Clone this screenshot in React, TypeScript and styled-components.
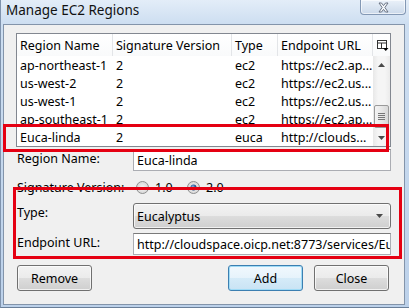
import React from "react";
import styled, { createGlobalStyle } from "styled-components";

const GlobalStyle = createGlobalStyle`
	html, body {
		margin: 0;
		padding: 0;
	}
	body {
		width: 409px;
		height: 308px;
		overflow: hidden;
		font-family: "Noto Sans", "Liberation Sans", sans-serif;
		font-size: 12.5px;
		color: #000;
	}
`;

const Window = styled.div`
	position: relative;
	width: 409px;
	height: 308px;
	box-sizing: border-box;
	display: flex;
	flex-direction: column;
	background: linear-gradient(to bottom, #e3edf8 0px, #cddef1 24px, #bcd1ea 100%);
	border-left: 1px solid #7f93ad;
	border-bottom: 1px solid #6a7f99;
`;

const TitleBar = styled.div`
	height: 24px;
	display: flex;
	align-items: flex-start;
`;

const Title = styled.div`
	padding: 2px 0 0 5px;
	line-height: 17px;
	font-size: 13.5px;
	color: #111;
`;

const CloseButton = styled.div`
	margin-left: auto;
	margin-right: 3px;
	width: 46px;
	height: 15px;
	box-sizing: border-box;
	border: 1px solid #8398b4;
	border-top: none;
	border-radius: 0 0 4px 4px;
	background: linear-gradient(to bottom, #eaf1f9, #cbd9ea);
	box-shadow: inset 0 0 0 1px rgba(255, 255, 255, 0.6);
	display: flex;
	align-items: center;
	justify-content: center;
`;

const Client = styled.div`
	margin: 0 4px 0 2px;
	height: 281px;
	box-sizing: border-box;
	border: 1px solid #8394aa;
	background: #f0f0f0;
	padding: 8px 12px 0 12px;
	display: flex;
	flex-direction: column;
`;

const Table = styled.div`
	width: 375px;
	box-sizing: border-box;
	border: 1px solid #828790;
	background: #fff;
`;

const cols = "96px 119px 46px 95px 17px";

const HeaderRow = styled.div`
	display: grid;
	grid-template-columns: ${cols};
	height: 22px;
`;

const HeaderCell = styled.div<{ $last?: boolean }>`
	display: flex;
	align-items: center;
	padding-left: ${({ $last }) => ($last ? "4px" : "3px")};
	border-right: ${({ $last }) => ($last ? "none" : "1px solid #e3e5e8")};
	white-space: nowrap;
	overflow: hidden;
	background: linear-gradient(to bottom, #ffffff, #f9fafb);
`;

const Body = styled.div`
	display: flex;
	height: 90px;
`;

const Rows = styled.div`
	width: 356px;
	display: flex;
	flex-direction: column;
`;

const Row = styled.div`
	display: grid;
	grid-template-columns: 96px 119px 46px 95px;
	height: 18px;
	align-items: center;
`;

const Cell = styled.div`
	padding-left: 3px;
	white-space: nowrap;
	overflow: hidden;
`;

const Scrollbar = styled.div`
	width: 17px;
	display: flex;
	flex-direction: column;
	background: linear-gradient(to right, #e8e8e8, #f5f5f5 30%, #f5f5f5 70%, #ebebeb);
`;

const ArrowBox = styled.div`
	height: 17px;
	display: flex;
	align-items: center;
	justify-content: center;
`;

const Track = styled.div`
	flex: 1;
	display: flex;
	flex-direction: column;
	justify-content: flex-end;
	padding-bottom: 1px;
`;

const Thumb = styled.div`
	height: 23px;
	margin: 0 1px;
	box-sizing: border-box;
	border: 1px solid #9a9a9a;
	border-radius: 2px;
	background: linear-gradient(to right, #f3f3f3, #e8e8e8 50%, #d8d8d8);
	display: flex;
	flex-direction: column;
	align-items: center;
	justify-content: center;
	gap: 1px;
`;

const Grip = styled.div`
	width: 7px;
	height: 1px;
	background: #777;
`;

const Form = styled.div`
	margin-top: 2px;
	padding-left: 1px;
	display: grid;
	grid-template-columns: 116px 258px;
	grid-template-rows: 22px 24px 26px 22px;
	row-gap: 4px;
`;

const Label = styled.div<{ $center?: boolean }>`
	align-self: ${({ $center }) => ($center ? "center" : "start")};
	padding-top: ${({ $center }) => ($center ? "0" : "1px")};
	line-height: 17px;
	white-space: nowrap;
`;

const TextInput = styled.div`
	box-sizing: border-box;
	height: 22px;
	border: 1px solid #abadb3;
	border-top-color: #7a7a7a;
	background: #fff;
	padding-left: 3px;
	display: flex;
	align-items: center;
	white-space: nowrap;
	overflow: hidden;
`;

const RadioGroup = styled.div`
	display: flex;
	align-items: center;
	padding-left: 3px;
`;

const RadioOption = styled.div`
	display: flex;
	align-items: center;
	gap: 6px;
	width: 51px;
`;

const Combo = styled.div`
	box-sizing: border-box;
	height: 26px;
	border: 1px solid #707070;
	border-radius: 3px;
	background: linear-gradient(to bottom, #f2f2f2 0%, #ebebeb 50%, #dddddd 50%, #cfcfcf 100%);
	box-shadow: inset 0 0 0 1px rgba(255, 255, 255, 0.7);
	display: flex;
	align-items: center;
	padding: 0 7px 0 3px;
	justify-content: space-between;
`;

const ButtonRow = styled.div`
	margin-top: 10px;
	display: flex;
	padding: 0 3px 0 1px;
	gap: 11px;
`;

const Button = styled.div<{ $primary?: boolean }>`
	width: 75px;
	height: 26px;
	box-sizing: border-box;
	border: 1px solid ${({ $primary }) => ($primary ? "#3c7fb1" : "#707070")};
	border-radius: 3px;
	background: ${({ $primary }) =>
		$primary
			? "linear-gradient(to bottom, #f1f8fd 0%, #e6f3fb 50%, #d5ebf8 50%, #c9e3f4 100%)"
			: "linear-gradient(to bottom, #f2f2f2 0%, #ebebeb 50%, #dddddd 50%, #cfcfcf 100%)"};
	box-shadow: inset 0 0 0 1px ${({ $primary }) => ($primary ? "#9fdbf6" : "rgba(255,255,255,0.7)")};
	display: flex;
	align-items: center;
	justify-content: center;
	&:first-child {
		margin-right: auto;
	}
`;

const Annotation = styled.div`
	position: absolute;
	box-sizing: border-box;
	border: 3px solid #e50012;
	pointer-events: none;
`;

const CloseGlyph = () => (
	<svg width="13" height="11" viewBox="0 0 13 11">
		<path
			d="M2 1 L4.5 1 L6.5 3.6 L8.5 1 L11 1 L7.9 5.5 L11 10 L8.5 10 L6.5 7.4 L4.5 10 L2 10 L5.1 5.5 Z"
			fill="#f4f7fb"
			stroke="#5d6878"
			strokeWidth="0.9"
		/>
	</svg>
);

const ColumnsIcon = () => (
	<svg width="12" height="11" viewBox="0 0 12 11">
		<rect x="0.5" y="0.5" width="9" height="8" fill="#fff" stroke="#333" />
		<line x1="0.5" y1="3" x2="9.5" y2="3" stroke="#333" />
		<line x1="4.5" y1="3" x2="4.5" y2="8.5" stroke="#333" />
		<path d="M6 8 L11.5 8 L8.75 11 Z" fill="#000" />
	</svg>
);

const Triangle = ({ up }: { up?: boolean }) => (
	<svg width="7" height="4" viewBox="0 0 7 4">
		<path d={up ? "M0 4 L3.5 0 L7 4 Z" : "M0 0 L7 0 L3.5 4 Z"} fill="#4a4a4a" />
	</svg>
);

const Radio = ({ checked }: { checked?: boolean }) => (
	<svg width="13" height="13" viewBox="0 0 13 13">
		<defs>
			<radialGradient id="rb" cx="50%" cy="50%" r="50%">
				<stop offset="0%" stopColor="#f6f6f6" />
				<stop offset="100%" stopColor="#d7d7d7" />
			</radialGradient>
			<radialGradient id="rd" cx="40%" cy="35%" r="60%">
				<stop offset="0%" stopColor="#8fb3de" />
				<stop offset="60%" stopColor="#2c5f9e" />
				<stop offset="100%" stopColor="#1a3e73" />
			</radialGradient>
		</defs>
		<circle cx="6.5" cy="6.5" r="6" fill="url(#rb)" stroke="#8e8f8f" />
		{checked && <circle cx="6.5" cy="6.5" r="3" fill="url(#rd)" />}
	</svg>
);

const regions = [
	["ap-northeast-1", "2", "ec2", "https://ec2.ap..."],
	["us-west-2", "2", "ec2", "https://ec2.us..."],
	["us-west-1", "2", "ec2", "https://ec2.us..."],
	["ap-southeast-1", "2", "ec2", "https://ec2.ap..."],
	["Euca-linda", "2", "euca", "http://clouds..."],
];

export default function App() {
	return (
		<Window>
			<GlobalStyle />
			<TitleBar>
				<Title>Manage EC2 Regions</Title>
				<CloseButton>
					<CloseGlyph />
				</CloseButton>
			</TitleBar>
			<Client>
				<Table>
					<HeaderRow>
						<HeaderCell>Region Name</HeaderCell>
						<HeaderCell>Signature Version</HeaderCell>
						<HeaderCell>Type</HeaderCell>
						<HeaderCell>Endpoint URL</HeaderCell>
						<HeaderCell $last>
							<ColumnsIcon />
						</HeaderCell>
					</HeaderRow>
					<Body>
						<Rows>
							{regions.map((r) => (
								<Row key={r[0]}>
									{r.map((c, i) => (
										<Cell key={i}>{c}</Cell>
									))}
								</Row>
							))}
						</Rows>
						<Scrollbar>
							<ArrowBox>
								<Triangle up />
							</ArrowBox>
							<Track>
								<Thumb>
									<Grip />
									<Grip />
									<Grip />
									<Grip />
								</Thumb>
							</Track>
							<ArrowBox>
								<Triangle />
							</ArrowBox>
						</Scrollbar>
					</Body>
				</Table>
				<Form>
					<Label>Region Name:</Label>
					<TextInput>Euca-linda</TextInput>
					<Label $center>Signature Version:</Label>
					<RadioGroup>
						<RadioOption>
							<Radio />
							<span>1.0</span>
						</RadioOption>
						<RadioOption>
							<Radio checked />
							<span>2.0</span>
						</RadioOption>
					</RadioGroup>
					<Label>Type:</Label>
					<Combo>
						<span>Eucalyptus</span>
						<Triangle />
					</Combo>
					<Label>Endpoint URL:</Label>
					<TextInput>http://cloudspace.oicp.net:8773/services/Eucalyptus</TextInput>
				</Form>
				<ButtonRow>
					<Button>Remove</Button>
					<Button $primary>Add</Button>
					<Button>Close</Button>
				</ButtonRow>
			</Client>
			<Annotation style={{ left: 2, top: 124, width: 386, height: 28 }} />
			<Annotation style={{ left: 12, top: 187, width: 389, height: 72 }} />
		</Window>
	);
}
